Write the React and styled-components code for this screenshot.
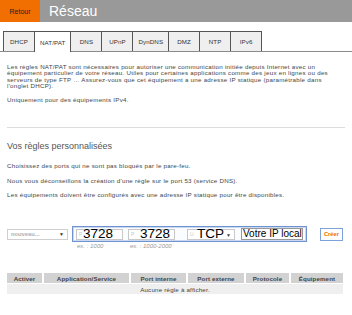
import React from "react";
import styled, { createGlobalStyle } from "styled-components";

const Global = createGlobalStyle`
  html, body { margin: 0; padding: 0; background: #fff; }
  body { font-family: "Liberation Sans", Arial, sans-serif; color: #444; }
`;

const Header = styled.header`
  display: flex;
  height: 22px;
  background: #999999;
`;
const Back = styled.div`
  width: 40px;
  background: #f16e00;
  color: #222;
  font-size: 7px;
  display: flex;
  align-items: center;
  justify-content: center;
`;
const PageTitle = styled.h1`
  margin: 0;
  padding-left: 9px;
  font-size: 14px;
  font-weight: normal;
  color: #fff;
  line-height: 22px;
`;

const Tabs = styled.nav`
  display: flex;
  margin-top: 9px;
  padding-left: 3px;
  height: 20px;
  border-bottom: 1px solid #8a8a8a;
`;
const Tab = styled.div`
  min-width: 32px;
  padding: 0 5px;
  box-sizing: border-box;
  height: ${(p) => (p.$active ? "21px" : "20px")};
  display: flex;
  align-items: center;
  justify-content: center;
  font-size: 6.2px;
  letter-spacing: 0.1px;
  color: #333;
  background: ${(p) => (p.$active ? "#fff" : "#efefef")};
  border: 1px solid #555;
  border-bottom: none;
  margin-right: -1px;
`;

const Content = styled.main`
  padding: 0 7px;
`;
const Text = styled.p`
  margin: 0;
  font-size: 6.2px;
  letter-spacing: 0.26px;
  line-height: 6.25px;
  color: #444;
  & + & { margin-top: ${(p) => p.$gap || 6}px; }
`;
const Intro = styled.div`
  margin-top: 12px;
`;
const Rule = styled.hr`
  margin: 24px 0 0;
  border: none;
  border-top: 1px solid #dcdcdc;
`;
const SectionTitle = styled.h2`
  margin: 13px 0 0;
  font-size: 9px;
  line-height: 10px;
  font-weight: normal;
  color: #555;
`;
const Notes = styled.div`
  margin-top: 12px;
`;

const FormRow = styled.div`
  display: flex;
  align-items: center;
  margin-top: 28px;
  height: 16px;
`;
const NewSelect = styled.div`
  width: 61px;
  height: 11px;
  box-sizing: border-box;
  border: 1px solid #cfcfcf;
  display: flex;
  align-items: center;
  justify-content: space-between;
  padding: 0 3px;
  font-size: 5.8px;
  font-weight: bold;
  color: #b0b0b0;
  margin-right: 4px;
`;
const Arrow = styled.span`
  color: #333;
  font-size: 5px;
  font-weight: normal;
`;
const Group = styled.div`
  display: flex;
  align-items: center;
  height: 16px;
  box-sizing: border-box;
  border: 1px solid #6f93cf;
  box-shadow: inset 0 0 0 1px #c9d8f0;
  padding: 0 3px 0 3px;
  background: #fbfcfe;
`;
const Field = styled.div`
  position: relative;
  width: ${(p) => p.$w}px;
  height: 11px;
  box-sizing: border-box;
  border: 1px solid #c8c8c8;
  background: #fff;
  margin-left: ${(p) => p.$ml || 0}px;
  font-size: 5px;
  color: #c8c8c8;
  display: flex;
  align-items: center;
  padding-left: 2px;
`;
const Big = styled.span`
  position: absolute;
  left: ${(p) => p.$left}px;
  top: -3px;
  font-size: 13.5px;
  line-height: 14px;
  color: #000;
`;
const FieldArrow = styled.span`
  position: absolute;
  right: 3px;
  top: 2px;
  font-size: 5px;
  color: #444;
`;
const IpField = styled.div`
  width: 62px;
  height: 12px;
  margin-left: 6px;
  box-sizing: border-box;
  border: 1px solid #9a9a9a;
  background: #fff;
  font-size: 10px;
  line-height: 10px;
  color: #000;
  padding-left: 1px;
  white-space: nowrap;
  overflow: hidden;
`;
const CreateButton = styled.button`
  margin-left: auto;
  margin-right: 2px;
  width: 23px;
  height: 13px;
  padding: 0;
  border: 1px solid #7ea3da;
  background: #fff;
  color: #f16e00;
  font-family: inherit;
  font-size: 5.8px;
  font-weight: bold;
`;
const Hints = styled.div`
  display: flex;
  margin-top: 1px;
  padding-left: 70px;
  font-size: 6px;
  line-height: 6px;
  font-style: italic;
  color: #9a9a9a;
`;
const Hint = styled.span`
  width: ${(p) => p.$w}px;
`;

const Table = styled.div`
  display: grid;
  grid-template-columns: 35px 85px 55px 56px 43px 1fr;
  column-gap: 2px;
  row-gap: 1px;
  width: 336px;
  margin-top: 24px;
`;
const Th = styled.div`
  height: 10px;
  background: #d2d2d2;
  font-size: 6.2px;
  letter-spacing: 0.1px;
  font-weight: bold;
  color: #444;
  display: flex;
  align-items: center;
  justify-content: center;
  white-space: nowrap;
`;
const Empty = styled.div`
  grid-column: 1 / -1;
  height: 10px;
  background: #efefef;
  font-size: 6.2px;
  letter-spacing: 0.2px;
  color: #444;
  display: flex;
  align-items: center;
  justify-content: center;
`;

const tabs = ["DHCP", "NAT/PAT", "DNS", "UPnP", "DynDNS", "DMZ", "NTP", "IPv6"];
const cols = ["Activer", "Application/Service", "Port interne", "Port externe", "Protocole", "Équipement"];

export default function App() {
  return (
    <>
      <Global />
      <Header>
        <Back>Retour</Back>
        <PageTitle>Réseau</PageTitle>
      </Header>
      <Tabs>
        {tabs.map((t) => (
          <Tab key={t} $active={t === "NAT/PAT"}>{t}</Tab>
        ))}
      </Tabs>
      <Content>
        <Intro>
          <Text>
            Les règles NAT/PAT sont nécessaires pour autoriser une communication initiée depuis Internet avec un
            équipement particulier de votre réseau. Utiles pour certaines applications comme des jeux en lignes ou des
            serveurs de type FTP … Assurez-vous que cet équipement a une adresse IP statique (paramétrable dans
            l'onglet DHCP).
          </Text>
          <Text>Uniquement pour des équipements IPv4.</Text>
        </Intro>
        <Rule />
        <SectionTitle>Vos règles personnalisées</SectionTitle>
        <Notes>
          <Text>Choisissez des ports qui ne sont pas bloqués par le pare-feu.</Text>
          <Text $gap={8}>Nous vous déconseillons la création d'une règle sur le port 53 (service DNS).</Text>
          <Text $gap={6}>Les équipements doivent être configurés avec une adresse IP statique pour être disponibles.</Text>
        </Notes>
        <FormRow>
          <NewSelect>
            nouveau...<Arrow>▼</Arrow>
          </NewSelect>
          <Group>
            <Field $w={47}>
              P
              <Big $left={6}>3728</Big>
            </Field>
            <Field $w={47} $ml={5}>
              P
              <Big $left={11}>3728</Big>
            </Field>
            <Field $w={48} $ml={12}>
              U
              <Big $left={9}>TCP</Big>
              <FieldArrow>▼</FieldArrow>
            </Field>
            <IpField>Votre IP local</IpField>
          </Group>
          <CreateButton>Créer</CreateButton>
        </FormRow>
        <Hints>
          <Hint $w={53}>ex. : 1000</Hint>
          <Hint $w={60}>ex. : 1000-2000</Hint>
        </Hints>
        <Table>
          {cols.map((c) => (
            <Th key={c}>{c}</Th>
          ))}
          <Empty>Aucune règle à afficher.</Empty>
        </Table>
      </Content>
    </>
  );
}
